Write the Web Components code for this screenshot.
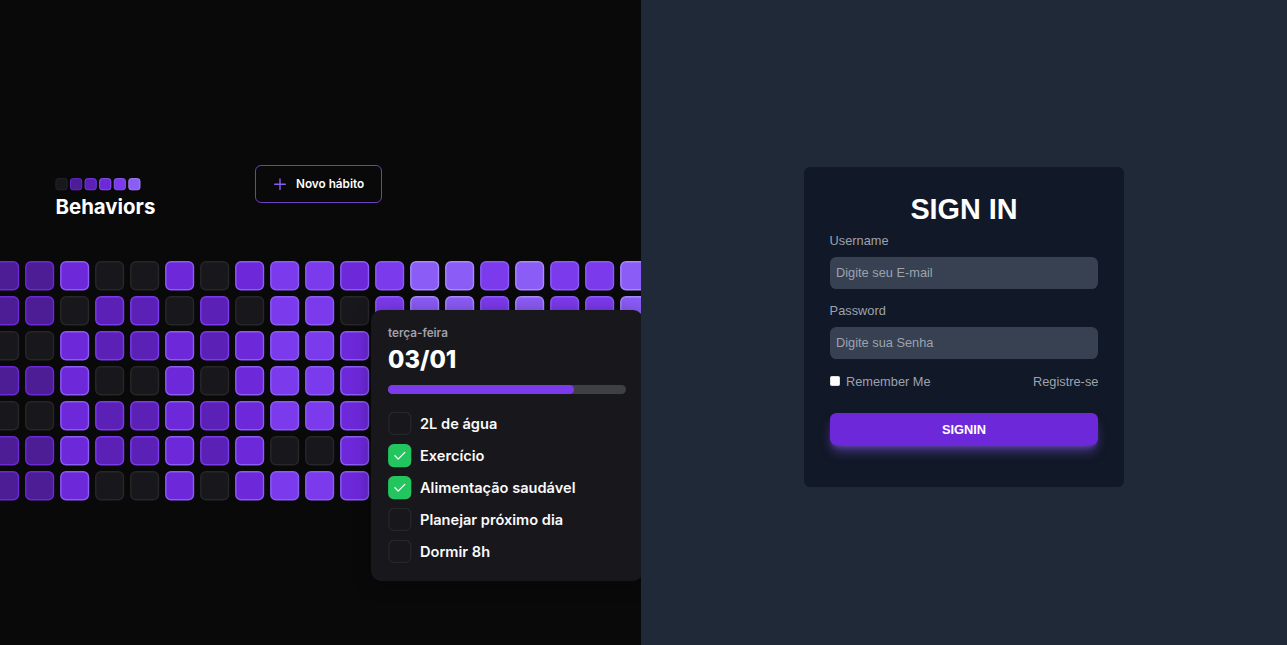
<!DOCTYPE html>
<html lang="pt-BR">
<head>
<meta charset="utf-8">
<title>Behaviors</title>
<style>
html,body{margin:0;height:100%;overflow:hidden;background:#1f2937}
</style>
</head>
<body>
<sign-in-page></sign-in-page>
<script>
const define = (name, html, setup) => customElements.define(name, class extends HTMLElement {
  connectedCallback() {
    if (this.shadowRoot) return;
    const t = document.createElement('template');
    t.innerHTML = html;
    this.attachShadow({mode: 'open'}).append(t.content.cloneNode(true));
    if (setup) setup(this, this.shadowRoot);
  }
});

// Fill and border for each completion level
const LEVELS = [['#18171c','#27272a'],['#4c1d95','#6d28d9'],['#5b21b6','#7c3aed'],['#6d28d9','#8b5cf6'],['#7c3aed','#8b5cf6'],['#8b5cf6','#a78bfa']];

define('day-cell', `
<style>:host{display:block;width:30px;height:30px}svg{display:block;width:100%;height:100%}</style>
<svg viewBox="0 0 30 30"><rect x="0.8" y="0.8" width="27.7" height="27.9" rx="5.2" stroke-width="1.4"/></svg>`, (el, root) => {
  const [fill, line] = LEVELS[+el.getAttribute('level')];
  const r = root.querySelector('rect');
  r.setAttribute('fill', fill);
  r.setAttribute('stroke', line);
});

define('level-scale', `
<style>:host{display:block}svg{display:block}</style>
<svg width="90" height="13">${LEVELS.map(([f, s], i) => `<rect x="${(0.9 + i * 14.58).toFixed(2)}" y="0.6" width="11.2" height="11.2" rx="2.4" fill="${f}" stroke="${s}" stroke-width="0.9"/>`).join('')}</svg>`);

const ROWS = ['1130030344345545445','1102202044045545445','0032232344345545445','1130030344345545445','0032232344345545445','1132232300345545445','1130030344345545445'];
define('habit-grid', `
<style>:host{display:grid;grid-template-columns:repeat(19,30px);gap:5px;margin-left:-10px}</style>
${ROWS.map((r, y) => [...r].map((n, x) => y > 1 && x > 10 ? '<span></span>' : `<day-cell level="${n}"></day-cell>`).join('')).join('')}`);

define('new-habit', `
<style>:host{display:flex;box-sizing:border-box;width:127px;height:38px;border:1px solid #6b3fc0;border-radius:6px;align-items:center;padding-left:18px;gap:9px;color:#fff;font:600 11.75px/1 Inter,sans-serif;white-space:nowrap}
svg{display:block}span{padding-top:2px}</style>
<svg width="13" height="13" viewBox="0 0 13 13"><path d="M6 .9v10.6M.7 6.2h10.6" stroke="#8b5cf6" stroke-width="1.4" stroke-linecap="round"/></svg><span><slot></slot></span>`);

define('habit-item', `
<style>:host{display:flex;align-items:center;gap:8px;height:24px;color:#fafafa;font:600 14.6px/24px Inter,sans-serif}
svg{display:block;flex:none}.on{display:none}:host([done]) .on{display:block}:host([done]) .off{display:none}</style>
<svg class="off" width="24" height="24"><rect x="0.9" y="0.4" width="21.8" height="22" rx="5.2" fill="#18171c" stroke="#27272a" stroke-width="1.3"/></svg>
<svg class="on" width="24" height="24"><rect x="0.1" y="0" width="23.2" height="23.2" rx="5.6" fill="#22c55e"/><path d="M7 11.8l3.2 3.3 6.6-6.7" fill="none" stroke="#fff" stroke-width="1.3" stroke-linecap="round" stroke-linejoin="round"/></svg>
<slot></slot>`);

define('day-panel', `
<style>:host{display:block;box-sizing:border-box;width:272px;height:271px;background:#18171c;border-radius:10px;padding:16px 17px 0;box-shadow:0 3px 18px rgba(0,0,0,.35);font-family:Inter,sans-serif}
.day{font:600 11.7px/15px Inter,sans-serif;color:#a1a1aa;height:15px}
.date{font:800 23.7px/32px Inter,sans-serif;color:#fff;margin-top:3px;height:32px}
.bar{height:9px;border-radius:5px;background:#3f3f46;margin-top:9px;width:238px}
.fill{height:9px;width:186px;border-radius:5px;background:#7c3aed}
.items{display:grid;row-gap:8px;margin-top:18px}</style>
<div class="day">terça-feira</div><div class="date">03/01</div>
<div class="bar"><div class="fill"></div></div>
<div class="items"><habit-item>2L de água</habit-item><habit-item done>Exercício</habit-item><habit-item done>Alimentação saudável</habit-item><habit-item>Planejar próximo dia</habit-item><habit-item>Dormir 8h</habit-item></div>`);

define('habit-preview', `
<style>:host{display:block;position:relative;width:641px;height:100vh;background:#09090a;overflow:hidden;box-sizing:border-box;padding-top:165px}
header{display:flex;height:96px;padding-left:55px;align-items:flex-start}
.brand{width:200px;padding-top:13px}
h2{margin:2px 0 0;font:700 20.4px/28px Inter,sans-serif;color:#fff;padding-left:.5px}
day-panel{position:absolute;left:371px;top:310px}</style>
<header><div class="brand"><level-scale></level-scale><h2>Behaviors</h2></div><new-habit>Novo hábito</new-habit></header>
<habit-grid></habit-grid><day-panel></day-panel>`);

define('text-field', `
<style>:host{display:flex;flex-direction:column;color:#9ca3af;font:12.8px/16px "Liberation Sans",Arial,sans-serif}
label{margin-bottom:8px}
input{box-sizing:border-box;width:100%;height:32px;margin:0;border:0;border-radius:6.4px;background:#374151;padding:0 6.4px 1px;font:inherit;color:#fff;outline:0}
input::placeholder{color:#9ca3af;opacity:1}</style>
<label><slot></slot></label><input>`, (el, root) => {
  const i = root.querySelector('input');
  i.placeholder = el.getAttribute('hint');
  i.type = el.getAttribute('type') || 'text';
});

define('sign-in-card', `
<style>:host{display:block;box-sizing:border-box;width:320px;height:320px;border-radius:6.4px;background:#111827;padding:25px 25.6px;font:12.8px/16px "Liberation Sans",Arial,sans-serif;color:#9ca3af}
h1{margin:0;height:41px;font-size:28.8px;line-height:34px;font-weight:700;color:#fff;text-align:center}
text-field+text-field{margin-top:14px}
.row{display:flex;justify-content:space-between;margin-top:15px}
.remember{display:flex;gap:6.4px}
input{appearance:none;box-sizing:border-box;width:10px;height:10px;margin:2px 0 0;background:#fff;border:1px solid #e0e0e2;border-radius:1.5px}
button{display:block;box-sizing:border-box;width:100%;height:32px;margin-top:23px;padding:1px 0 0;border:0;border-radius:6.4px;background:#6d28d9;color:#fff;font:700 12.8px/16px "Liberation Sans",Arial,sans-serif;box-shadow:0 8px 12px -2.4px rgba(139,92,246,.5),0 3.2px 4.8px -3.2px rgba(139,92,246,.5)}</style>
<h1>SIGN IN</h1>
<text-field hint="Digite seu E-mail">Username</text-field>
<text-field type="password" hint="Digite sua Senha">Password</text-field>
<div class="row"><label class="remember"><input type="checkbox"><span>Remember Me</span></label><span>Registre-se</span></div>
<button>SIGNIN</button>`);

define('sign-in-page', `
<style>:host{display:grid;grid-template-columns:641px 1fr;height:100vh;background:#1f2937}
main{display:grid;justify-content:center;align-content:start;padding-top:167px}</style>
<habit-preview></habit-preview><main><sign-in-card></sign-in-card></main>`);
</script>
</body>
</html>
